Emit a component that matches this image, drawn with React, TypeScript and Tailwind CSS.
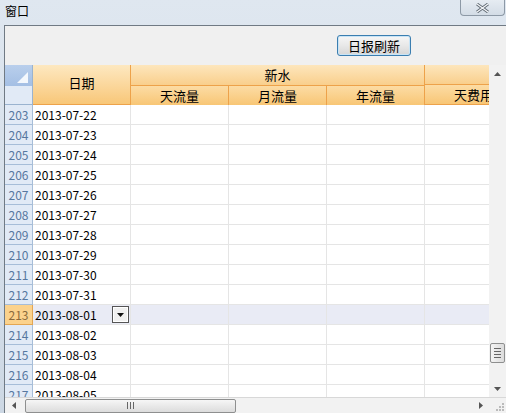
import React from 'react';

const rows = [
  { n: 203, d: '2013-07-22' },
  { n: 204, d: '2013-07-23' },
  { n: 205, d: '2013-07-24' },
  { n: 206, d: '2013-07-25' },
  { n: 207, d: '2013-07-26' },
  { n: 208, d: '2013-07-27' },
  { n: 209, d: '2013-07-28' },
  { n: 210, d: '2013-07-29' },
  { n: 211, d: '2013-07-30' },
  { n: 212, d: '2013-07-31' },
  { n: 213, d: '2013-08-01' },
  { n: 214, d: '2013-08-02' },
  { n: 215, d: '2013-08-03' },
  { n: 216, d: '2013-08-04' },
  { n: 217, d: '2013-08-05' },
];

const font = { fontFamily: '"Noto Sans CJK SC", "DejaVu Sans", sans-serif' };

const App: React.FC = () => {
  return (
    <div
      className="w-[506px] h-[413px] overflow-hidden flex flex-col bg-gradient-to-b from-[#dfe7f0] to-[#cdd8e4] text-[12px] text-black"
      style={font}
    >
      {/* Title bar */}
      <div className="h-[25px] shrink-0 flex items-start justify-between">
        <span className="pl-[5px] pt-[4px] leading-[14px]">窗口</span>
        <div className="w-[45px] h-[16px] mr-[1px] border border-t-0 border-[#8d99a6] rounded-b-[4px] bg-gradient-to-b from-[#e6ecf2] to-[#d3dce6] flex items-center justify-center">
          <svg width="13" height="10" viewBox="0 0 13 10">
            <path d="M1 1 L12 9 M12 1 L1 9" stroke="#5c6670" strokeWidth="3" />
            <path d="M1 1 L12 9 M12 1 L1 9" stroke="#f4f6f8" strokeWidth="1.3" />
          </svg>
        </div>
      </div>

      {/* Body */}
      <div className="flex-1 min-h-0 ml-[4px] border-t border-l border-[#707a84] bg-[#f0f0f0] flex flex-col">
        {/* Toolbar */}
        <div className="h-[39px] shrink-0 flex items-center pl-[332px]">
          <button className="w-[74px] h-[21px] rounded-[3px] border border-[#3b7eb0] bg-gradient-to-b from-[#f6f6f6] via-[#e8e8e8] to-[#d6d6d6] text-[13px] leading-[13px] shadow-[inset_0_0_0_1px_#c8e4f6]">
            日报刷新
          </button>
        </div>

        {/* Grid */}
        <div className="flex-1 min-h-0 flex flex-col">
          <div className="flex-1 flex min-h-0">
            <div className="flex-1 min-h-0 overflow-hidden flex flex-col bg-white">
              {/* Header */}
              <div className="h-[40px] shrink-0 flex w-max">
                <div className="w-[28px] flex flex-col border-r border-[#9ab3cf]">
                  <div className="h-[21px] bg-gradient-to-b from-[#b9cfec] to-[#a4bfe4] flex items-end justify-end pr-[4px] pb-[3px]">
                    <svg width="11" height="11" viewBox="0 0 11 11">
                      <path d="M11 0 L11 11 L0 11 Z" fill="#f4f8fd" />
                    </svg>
                  </div>
                  <div className="flex-1 bg-[#e1eaf6] border-b border-[#9ab3cf]" />
                </div>
                <div className="w-[98px] bg-gradient-to-b from-[#fde8c0] to-[#f8c778] border-r border-b border-[#eda24a] flex items-center justify-center pb-[3px] text-[13px]">
                  日期
                </div>
                <div className="w-[294px] flex flex-col">
                  <div className="h-[21px] bg-gradient-to-b from-[#fde6bc] to-[#f9cf8c] border-r border-b border-[#eda24a] flex items-center justify-center text-[13px]">
                    新水
                  </div>
                  <div className="flex-1 flex">
                    {['天流量', '月流量', '年流量'].map((t) => (
                      <div
                        key={t}
                        className="w-[98px] bg-gradient-to-b from-[#fcdca4] to-[#f8c675] border-r border-b border-[#eda24a] flex items-center justify-center text-[13px]"
                      >
                        {t}
                      </div>
                    ))}
                  </div>
                </div>
                <div className="w-[98px] flex flex-col">
                  <div className="h-[21px] bg-gradient-to-b from-[#fde6bc] to-[#f9cf8c] border-r border-b border-[#eda24a]" />
                  <div className="flex-1 bg-gradient-to-b from-[#fcdca4] to-[#f8c675] border-r border-b border-[#eda24a] flex items-center justify-center text-[13px]">
                    天费用
                  </div>
                </div>
              </div>

              {/* Rows */}
              {rows.map((r) => {
                const sel = r.n === 213;
                return (
                  <div key={r.n} className={`h-[20px] shrink-0 flex w-max ${sel ? 'bg-[#e9ebf5]' : 'bg-white'}`}>
                    <div
                      className={`w-[28px] border-r border-b flex items-center justify-center text-[12px] ${
                        sel
                          ? 'bg-[#fbd28c] border-[#e3a652] text-[#8a6a3a]'
                          : 'bg-[#e1eaf6] border-[#a6bdd8] text-[#56779f]'
                      }`}
                    >
                      {r.n}
                    </div>
                    <div className="w-[98px] border-r border-b border-[#e5e5e5] flex items-center pl-[2px] relative">
                      <span className="text-[12px]">{r.d}</span>
                      {sel && (
                        <div className="absolute right-[1px] top-[1px] w-[17px] h-[17px] border border-[#555] bg-[#f0f0f0] flex items-center justify-center shadow-[inset_0_0_0_1px_#fff]">
                          <svg width="7" height="4" viewBox="0 0 7 4">
                            <path d="M0 0 L7 0 L3.5 4 Z" fill="#111" />
                          </svg>
                        </div>
                      )}
                    </div>
                    {[0, 1, 2, 3].map((c) => (
                      <div key={c} className="w-[98px] border-r border-b border-[#e5e5e5]" />
                    ))}
                  </div>
                );
              })}
            </div>

            {/* Vertical scrollbar */}
            <div className="w-[17px] shrink-0 bg-[#f2f2f2] flex flex-col items-center">
              <div className="h-[17px] flex items-center justify-center">
                <svg width="7" height="4" viewBox="0 0 7 4">
                  <path d="M0 4 L7 4 L3.5 0 Z" fill="#555" />
                </svg>
              </div>
              <div className="flex-1 flex flex-col pt-[261px]">
                <div className="w-[15px] h-[20px] rounded-[2px] border border-[#8e8f8f] bg-gradient-to-r from-[#f4f4f4] to-[#dcdcdc] flex flex-col items-center justify-center gap-[2px]">
                  <div className="w-[7px] h-px bg-[#666]" />
                  <div className="w-[7px] h-px bg-[#666]" />
                  <div className="w-[7px] h-px bg-[#666]" />
                  <div className="w-[7px] h-px bg-[#666]" />
                </div>
              </div>
              <div className="h-[17px] flex items-center justify-center">
                <svg width="7" height="4" viewBox="0 0 7 4">
                  <path d="M0 0 L7 0 L3.5 4 Z" fill="#555" />
                </svg>
              </div>
            </div>
          </div>

          {/* Horizontal scrollbar */}
          <div className="h-[16px] shrink-0 flex bg-[#f2f2f2] border-t border-[#d8d8d8]">
            <div className="w-[17px] flex items-center justify-center">
              <svg width="4" height="7" viewBox="0 0 4 7">
                <path d="M4 0 L4 7 L0 3.5 Z" fill="#555" />
              </svg>
            </div>
            <div className="flex-1 flex items-center">
              <div className="ml-[3px] w-[211px] h-[14px] rounded-[2px] border border-[#8e8f8f] bg-gradient-to-b from-[#f6f6f6] to-[#dcdcdc] flex items-center justify-center gap-[2px]">
                <div className="w-px h-[7px] bg-[#666]" />
                <div className="w-px h-[7px] bg-[#666]" />
                <div className="w-px h-[7px] bg-[#666]" />
              </div>
            </div>
            <div className="w-[17px] flex items-center justify-center">
              <svg width="4" height="7" viewBox="0 0 4 7">
                <path d="M0 0 L0 7 L4 3.5 Z" fill="#555" />
              </svg>
            </div>
            <div className="w-[17px] flex items-end justify-end p-[2px]">
              <svg width="8" height="8" viewBox="0 0 8 8">
                <rect x="6" y="0" width="2" height="2" fill="#bbb" />
                <rect x="3" y="3" width="2" height="2" fill="#bbb" />
                <rect x="6" y="3" width="2" height="2" fill="#bbb" />
                <rect x="0" y="6" width="2" height="2" fill="#bbb" />
                <rect x="3" y="6" width="2" height="2" fill="#bbb" />
                <rect x="6" y="6" width="2" height="2" fill="#bbb" />
              </svg>
            </div>
          </div>
        </div>
      </div>
    </div>
  );
};

export default App;
